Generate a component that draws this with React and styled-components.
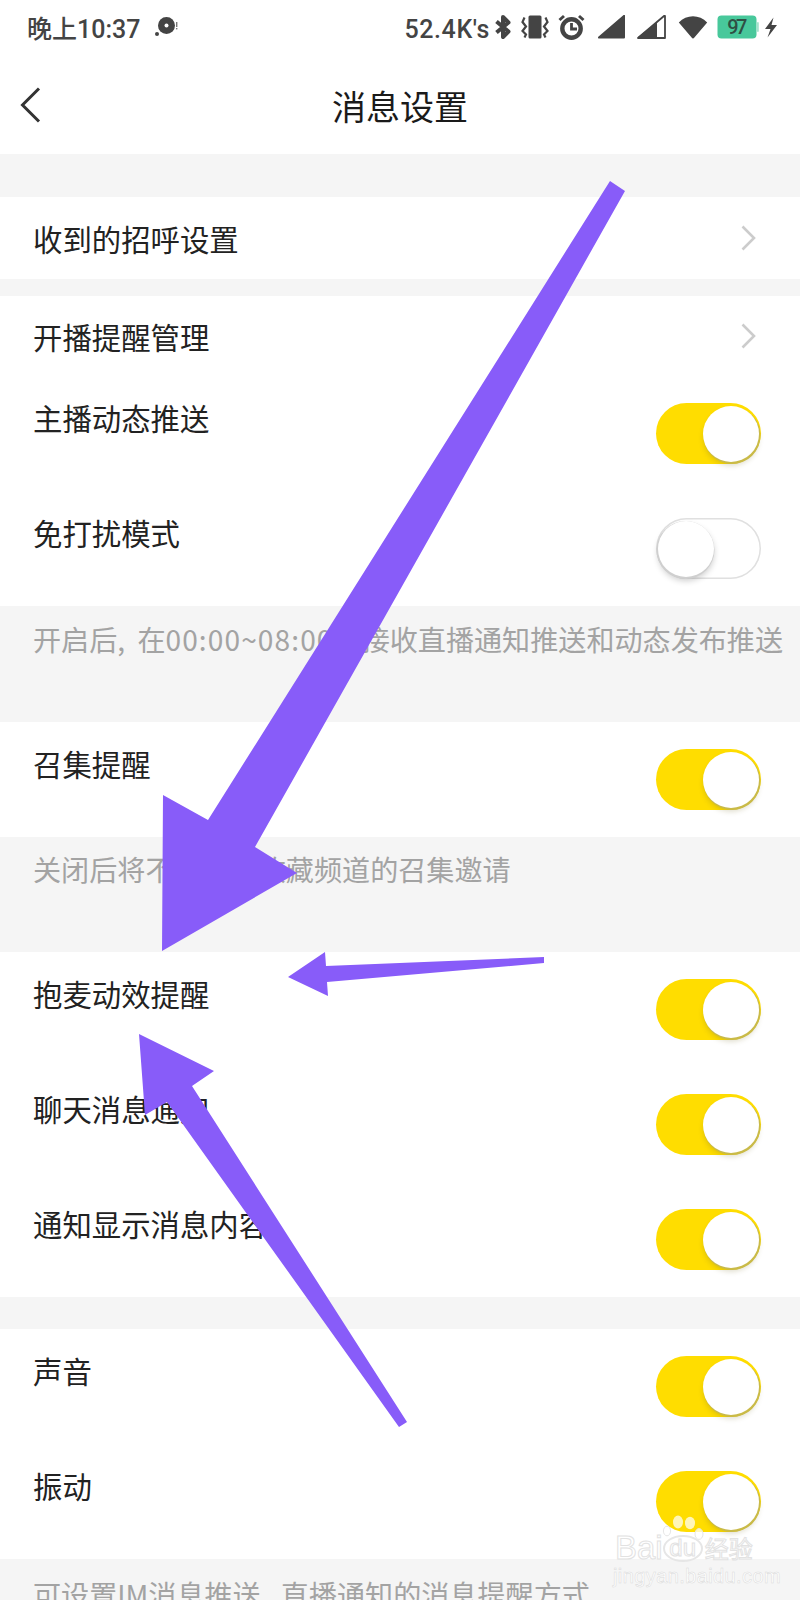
import React from "react";
import styled, { createGlobalStyle } from "styled-components";

const Global = createGlobalStyle`
  html, body { margin: 0; padding: 0; background: #fff; }
  * { box-sizing: border-box; }
`;

const FONT = `"Noto Sans CJK SC", "Noto Sans", Roboto, sans-serif`;

const Page = styled.div`
  position: relative;
  width: 800px;
  height: 1600px;
  overflow: hidden;
  background: #f5f5f5;
  font-family: ${FONT};
`;

const StatusBar = styled.div`
  display: flex;
  align-items: center;
  justify-content: space-between;
  height: 58px;
  padding: 0 22px 0 27px;
  background: #fff;
  color: #444;
`;

const StatusGroup = styled.div`
  display: flex;
  align-items: center;
`;

const StatusText = styled.span`
  font-family: Roboto, ${FONT};
  font-size: 25px;
  font-weight: 500;
  line-height: 1;
  letter-spacing: ${(p) => p.$spacing || 0}px;
  white-space: nowrap;
`;

const StatusIcon = styled.svg`
  display: block;
  flex: none;
  margin: 0 0 4px ${(p) => p.$gap || 0}px;
`;

const Header = styled.header`
  display: grid;
  grid-template-columns: 1fr auto 1fr;
  align-items: center;
  height: 96px;
  background: #fff;
`;

const BackIcon = styled.svg`
  display: block;
  margin: 0 0 3px 20px;
`;

const Title = styled.h1`
  margin: 0;
  font-size: 34px;
  font-weight: 400;
  line-height: 44px;
  color: #1a1a1a;
`;

const Section = styled.section`
  margin-top: ${(p) => p.$top || 0}px;
  background: #fff;
`;

const Row = styled.div`
  display: flex;
  justify-content: space-between;
  height: ${(p) => p.$h || 115}px;
  padding: 0 39px 0 33px;
`;

const NavRow = styled(Row)`
  align-items: center;
`;

const Label = styled.span`
  margin-top: 21px;
  font-size: 29.4px;
  line-height: 40px;
  color: #222;
`;

const NavLabel = styled(Label)`
  margin-top: 0;
`;

const Note = styled.p`
  margin: 0;
  height: ${(p) => p.$h}px;
  padding: ${(p) => p.$top}px 0 0 33px;
  font-size: 28.1px;
  line-height: 40px;
  word-spacing: 6px;
  color: #a3a3a3;
  white-space: nowrap;
  overflow: hidden;
`;

const NoteTime = styled.span`
  letter-spacing: 1.1px;
`;

const Track = styled.div`
  position: relative;
  flex: none;
  width: 105px;
  height: 61px;
  margin-top: 27px;
  border-radius: 31px;
  background: ${(p) => (p.$on ? "#ffdd00" : "#fff")};
  box-shadow: ${(p) => (p.$on ? "none" : "inset 0 0 0 1.5px #e0e0e0")};
`;

const Knob = styled.div`
  position: absolute;
  top: 3px;
  left: ${(p) => (p.$on ? 47 : 2)}px;
  width: 56px;
  height: 56px;
  border-radius: 50%;
  background: #fff;
  box-shadow: ${(p) =>
    p.$on
      ? "1px 1.5px 0 0.5px #c9ba48, 0 4px 5px rgba(120,110,40,.22)"
      : "-0.5px 1px 0 1px #cfcfcf, 0 4px 6px rgba(0,0,0,.2)"};
`;

const Chevron = styled.svg`
  display: block;
  flex: none;
  margin-right: 5px;
`;

const Overlay = styled.svg`
  position: absolute;
  inset: 0;
  pointer-events: none;
`;

const Watermark = styled.div`
  position: absolute;
  left: 612px;
  top: 1515px;
  width: 150px;
  pointer-events: none;
`;

const WatermarkPaw = styled.svg`
  display: block;
  margin: 0 0 -7px 48px;
`;

const WatermarkBrand = styled.div`
  display: flex;
  align-items: center;
  height: 28px;
  padding-left: 3px;
  font-family: "Liberation Sans", sans-serif;
  font-size: 33px;
  line-height: 28px;
  color: #fff;
  -webkit-text-stroke: 1px #e2e2e2;
`;

const WatermarkPalm = styled.span`
  display: flex;
  align-items: center;
  justify-content: center;
  width: 40px;
  height: 27px;
  border: 2px solid #e6e6e6;
  border-radius: 50%;
  font-size: 24px;
`;

const WatermarkCjk = styled.span`
  margin-left: 2px;
  font-family: ${FONT};
  font-size: 24px;
  letter-spacing: 0;
`;

const WatermarkUrl = styled.div`
  margin: 6px 0 0 1px;
  font-family: "Liberation Sans", sans-serif;
  font-size: 20px;
  line-height: 16px;
  letter-spacing: 0.4px;
  white-space: nowrap;
  color: #fff;
  -webkit-text-stroke: 0.5px #dadada;
`;

const DiscIcon = () => (
  <StatusIcon $gap={14} width="24" height="24" viewBox="0 0 24 24">
    <circle cx="12.5" cy="10.5" r="8.5" fill="#444" />
    <circle cx="12.5" cy="10.5" r="2" fill="#fff" />
    <circle cx="3" cy="19" r="2" fill="#444" />
    <rect x="22" y="7" width="1.4" height="5" fill="#777" />
    <rect x="22" y="13" width="1.4" height="1.4" fill="#777" />
  </StatusIcon>
);

const BluetoothIcon = () => (
  <StatusIcon $gap={3} width="20" height="26" viewBox="0 0 20 26">
    <path d="M3.5 7.5 L15.5 17.5 L10 23 V3 L15.5 8.5 L3.5 18.5" fill="none" stroke="#444" strokeWidth="4" strokeLinejoin="round" />
  </StatusIcon>
);

const VibrateIcon = () => (
  <StatusIcon $gap={8} width="28" height="24" viewBox="0 0 28 24">
    <rect x="7.5" y="0.5" width="13" height="23" rx="1.5" fill="#444" />
    <path d="M3.5 2.5 L1.5 7 L5 11.5 L1.5 16 L5 19.5 L3.5 22.5 M24.5 2.5 L26.5 7 L23 11.5 L26.5 16 L23 19.5 L24.5 22.5" fill="none" stroke="#444" strokeWidth="2.2" />
  </StatusIcon>
);

const AlarmIcon = () => (
  <StatusIcon $gap={9} width="27" height="26" viewBox="0 0 27 26">
    <circle cx="13.5" cy="14.5" r="9.2" fill="none" stroke="#444" strokeWidth="4.4" />
    <path d="M13.5 9 V15 H19" fill="none" stroke="#444" strokeWidth="2.8" />
    <path d="M1.5 6 L6 2 M25.5 6 L21 2" stroke="#444" strokeWidth="3" />
  </StatusIcon>
);

const SignalIcon = ({ full, gap }) => (
  <StatusIcon $gap={gap} width="29" height="24" viewBox="0 0 29 24">
    {full ? (
      <path d="M28 .5 V22.5 a1 1 0 0 1 -1 1 H2 a1 1 0 0 1 -.7 -1.7 L26.3 .2 a1 1 0 0 1 1.7 .3Z" fill="#444" />
    ) : (
      <>
        <path d="M28 1 V23 H1 L27 1Z" fill="none" stroke="#444" strokeWidth="1.8" strokeLinejoin="round" />
        <path d="M20 7.5 V23.5 H2 a1 1 0 0 1 -.7 -1.7Z" fill="#444" />
      </>
    )}
  </StatusIcon>
);

const WifiIcon = () => (
  <StatusIcon $gap={12} width="30" height="24" viewBox="0 0 30 24">
    <path d="M.8 7.5 C8.5 -1 21.5 -1 29.2 7.5 L16.4 22.6 a1.8 1.8 0 0 1 -2.8 0Z" fill="#444" />
  </StatusIcon>
);

const BatteryIcon = () => (
  <StatusIcon $gap={9} width="42" height="24" viewBox="0 0 42 24">
    <rect x="0.5" y="0.5" width="39" height="23" rx="4" fill="#48c89b" />
    <rect x="40" y="7" width="1.8" height="10" rx="0.9" fill="#a5e2cc" />
    <text x="19" y="19" textAnchor="middle" fontFamily="Roboto, sans-serif" fontSize="20" fontWeight="500" fill="#2f4f44" letterSpacing="-2.5">97</text>
  </StatusIcon>
);

const BoltIcon = () => (
  <StatusIcon $gap={5} width="14" height="21" viewBox="0 0 14 21">
    <path d="M9.5 0.5 L1 12 H6.5 L3.5 20.5 L13 8 H7.5Z" fill="#444" />
  </StatusIcon>
);

const ChevronIcon = () => (
  <Chevron width="15" height="26" viewBox="0 0 15 26">
    <path d="M1.5 1.5 L13 13 L1.5 24.5" fill="none" stroke="#cccccc" strokeWidth="2.6" />
  </Chevron>
);

const Switch = ({ on = true }) => (
  <Track $on={on}>
    <Knob $on={on} />
  </Track>
);

const ToggleRow = ({ label, on }) => (
  <Row>
    <Label>{label}</Label>
    <Switch on={on} />
  </Row>
);

export default function App() {
  return (
    <Page>
      <Global />
      <StatusBar>
        <StatusGroup>
          <StatusText>晚上10:37</StatusText>
          <DiscIcon />
        </StatusGroup>
        <StatusGroup>
          <StatusText $spacing={0.6}>52.4K's</StatusText>
          <BluetoothIcon />
          <VibrateIcon />
          <AlarmIcon />
          <SignalIcon full gap={12} />
          <SignalIcon gap={11} />
          <WifiIcon />
          <BatteryIcon />
          <BoltIcon />
        </StatusGroup>
      </StatusBar>

      <Header>
        <BackIcon width="22" height="36" viewBox="0 0 22 36">
          <path d="M19 1.5 L2.5 18 L19 34.5" fill="none" stroke="#333" strokeWidth="3" />
        </BackIcon>
        <Title>消息设置</Title>
      </Header>

      <Section $top={43}>
        <NavRow $h={82}>
          <NavLabel>收到的招呼设置</NavLabel>
          <ChevronIcon />
        </NavRow>
      </Section>

      <Section $top={17}>
        <NavRow $h={80}>
          <NavLabel>开播提醒管理</NavLabel>
          <ChevronIcon />
        </NavRow>
        <ToggleRow label="主播动态推送" on />
        <ToggleRow label="免打扰模式" on={false} />
      </Section>
      <Note $h={116} $top={13}>
        开启后, 在<NoteTime>00:00~08:00</NoteTime>不接收直播通知推送和动态发布推送
      </Note>

      <Section>
        <ToggleRow label="召集提醒" on />
      </Section>
      <Note $h={115} $top={12}>关闭后将不再接收收藏频道的召集邀请</Note>

      <Section>
        <ToggleRow label="抱麦动效提醒" on />
        <ToggleRow label="聊天消息通知" on />
        <ToggleRow label="通知显示消息内容" on />
      </Section>

      <Section $top={32}>
        <ToggleRow label="声音" on />
        <ToggleRow label="振动" on />
      </Section>
      <Note $h={41} $top={15}>可设置IM消息推送, 直播通知的消息提醒方式</Note>

      <Overlay width="800" height="1600" viewBox="0 0 800 1600">
        <g fill="#885cf9">
          <polygon points="610,181 625,191 255,847 297,873 162,951 163,795 208,820" />
          <polygon points="288,977 325,952 326,966 544,957 544,963 327,982 328,996" />
          <polygon points="139,1034 214,1071 192,1086 407,1422 399,1427 167,1102 145,1115" />
        </g>
      </Overlay>

      <Watermark>
        <WatermarkPaw width="46" height="26" viewBox="0 0 46 26">
          <g fill="rgba(255,255,255,.72)">
            <ellipse cx="18" cy="7" rx="5" ry="6.5" />
            <ellipse cx="30" cy="8" rx="5" ry="6.2" />
            <ellipse cx="7" cy="16" rx="3.6" ry="4.8" stroke="#e6e6e6" />
            <ellipse cx="39" cy="19" rx="4" ry="5.4" stroke="#e6e6e6" />
          </g>
        </WatermarkPaw>
        <WatermarkBrand>
          Bai
          <WatermarkPalm>du</WatermarkPalm>
          <WatermarkCjk>经验</WatermarkCjk>
        </WatermarkBrand>
        <WatermarkUrl>jingyan.baidu.com</WatermarkUrl>
      </Watermark>
    </Page>
  );
}
